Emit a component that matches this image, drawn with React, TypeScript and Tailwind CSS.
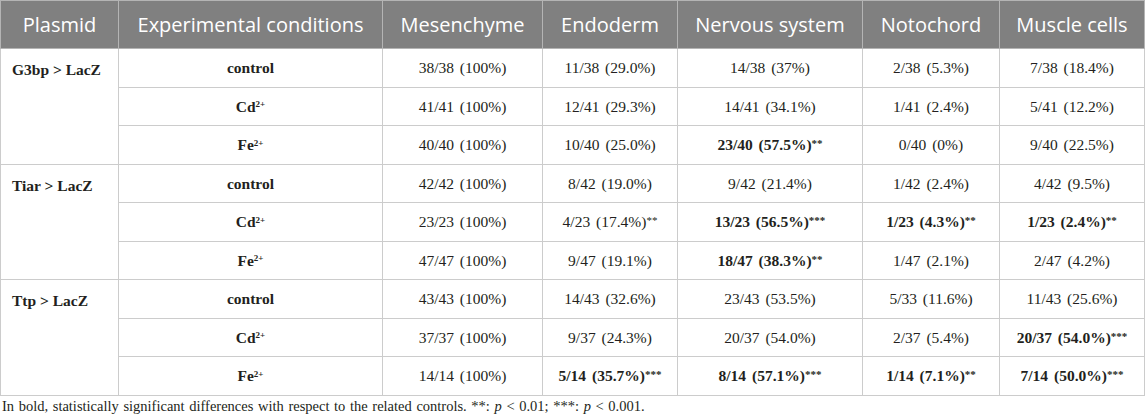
import React from 'react';

type Cell = { v: string; stars?: string; bold?: boolean };

interface Group {
  plasmid: string;
  rows: { cond: 'control' | 'Cd' | 'Fe'; cells: Cell[] }[];
}

const c = (v: string, stars?: string, bold?: boolean): Cell => ({ v, stars, bold });

const groups: Group[] = [
  {
    plasmid: 'G3bp > LacZ',
    rows: [
      { cond: 'control', cells: [c('38/38 (100%)'), c('11/38 (29.0%)'), c('14/38 (37%)'), c('2/38 (5.3%)'), c('7/38 (18.4%)')] },
      { cond: 'Cd', cells: [c('41/41 (100%)'), c('12/41 (29.3%)'), c('14/41 (34.1%)'), c('1/41 (2.4%)'), c('5/41 (12.2%)')] },
      { cond: 'Fe', cells: [c('40/40 (100%)'), c('10/40 (25.0%)'), c('23/40 (57.5%)', '**', true), c('0/40 (0%)'), c('9/40 (22.5%)')] },
    ],
  },
  {
    plasmid: 'Tiar > LacZ',
    rows: [
      { cond: 'control', cells: [c('42/42 (100%)'), c('8/42 (19.0%)'), c('9/42 (21.4%)'), c('1/42 (2.4%)'), c('4/42 (9.5%)')] },
      { cond: 'Cd', cells: [c('23/23 (100%)'), c('4/23 (17.4%)', '**'), c('13/23 (56.5%)', '***', true), c('1/23 (4.3%)', '**', true), c('1/23 (2.4%)', '**', true)] },
      { cond: 'Fe', cells: [c('47/47 (100%)'), c('9/47 (19.1%)'), c('18/47 (38.3%)', '**', true), c('1/47 (2.1%)'), c('2/47 (4.2%)')] },
    ],
  },
  {
    plasmid: 'Ttp > LacZ',
    rows: [
      { cond: 'control', cells: [c('43/43 (100%)'), c('14/43 (32.6%)'), c('23/43 (53.5%)'), c('5/33 (11.6%)'), c('11/43 (25.6%)')] },
      { cond: 'Cd', cells: [c('37/37 (100%)'), c('9/37 (24.3%)'), c('20/37 (54.0%)'), c('2/37 (5.4%)'), c('20/37 (54.0%)', '***', true)] },
      { cond: 'Fe', cells: [c('14/14 (100%)'), c('5/14 (35.7%)', '***', true), c('8/14 (57.1%)', '***', true), c('1/14 (7.1%)', '**', true), c('7/14 (50.0%)', '***', true)] },
    ],
  },
];

const headers = ['Plasmid', 'Experimental conditions', 'Mesenchyme', 'Endoderm', 'Nervous system', 'Notochord', 'Muscle cells'];
const widths = ['w-[118px]', 'w-[264px]', 'w-[160px]', 'w-[135px]', 'w-[185px]', 'w-[137px]', 'w-[145px]'];

const Condition = ({ cond }: { cond: 'control' | 'Cd' | 'Fe' }) => {
  if (cond === 'control') return <>control</>;
  return (
    <>
      {cond}
      <sup className="text-[9px]">2+</sup>
    </>
  );
};

export default function App() {
  return (
    <div className="w-[1145px] h-[419px] bg-white text-[#231f20] font-['Liberation_Serif',serif]">
      <table className="table-fixed border-collapse w-[1145px]">
        <colgroup>
          {widths.map((w, i) => (
            <col key={i} className={w} />
          ))}
        </colgroup>
        <thead>
          <tr className="h-[48px] bg-[#808080]">
            {headers.map((h) => (
              <th
                key={h}
                className="border border-[#b4b4b4] font-['Open_Sans',sans-serif] font-normal text-[20px] text-white text-center p-0"
              >
                {h}
              </th>
            ))}
          </tr>
        </thead>
        <tbody>
          {groups.map((g) =>
            g.rows.map((r, ri) => (
              <tr key={g.plasmid + ri} className="h-[38.5px]">
                {ri === 0 && (
                  <td
                    rowSpan={3}
                    className="border border-[#cccccc] align-top pl-[11px] pt-[9px] font-bold text-[15.5px] whitespace-nowrap"
                  >
                    {g.plasmid}
                  </td>
                )}
                <td className="border border-[#cccccc] text-center font-bold text-[15.5px] p-0">
                  <Condition cond={r.cond} />
                </td>
                {r.cells.map((cell, ci) => (
                  <td
                    key={ci}
                    className={`border border-[#cccccc] text-center text-[15.5px] p-0 whitespace-nowrap [word-spacing:2px] ${cell.bold ? 'font-bold' : ''}`}
                  >
                    {cell.v}
                    {cell.stars && <span className="text-[11px] relative -top-[3px]">{cell.stars}</span>}
                  </td>
                ))}
              </tr>
            ))
          )}
        </tbody>
      </table>
      <p className="text-[14.5px] leading-[18px] pl-[2px] pt-[1px] [word-spacing:1px]">
        In bold, statistically significant differences with respect to the related controls. **: <i>p</i> &lt; 0.01; ***:{' '}
        <i>p</i> &lt; 0.001.
      </p>
    </div>
  );
}
